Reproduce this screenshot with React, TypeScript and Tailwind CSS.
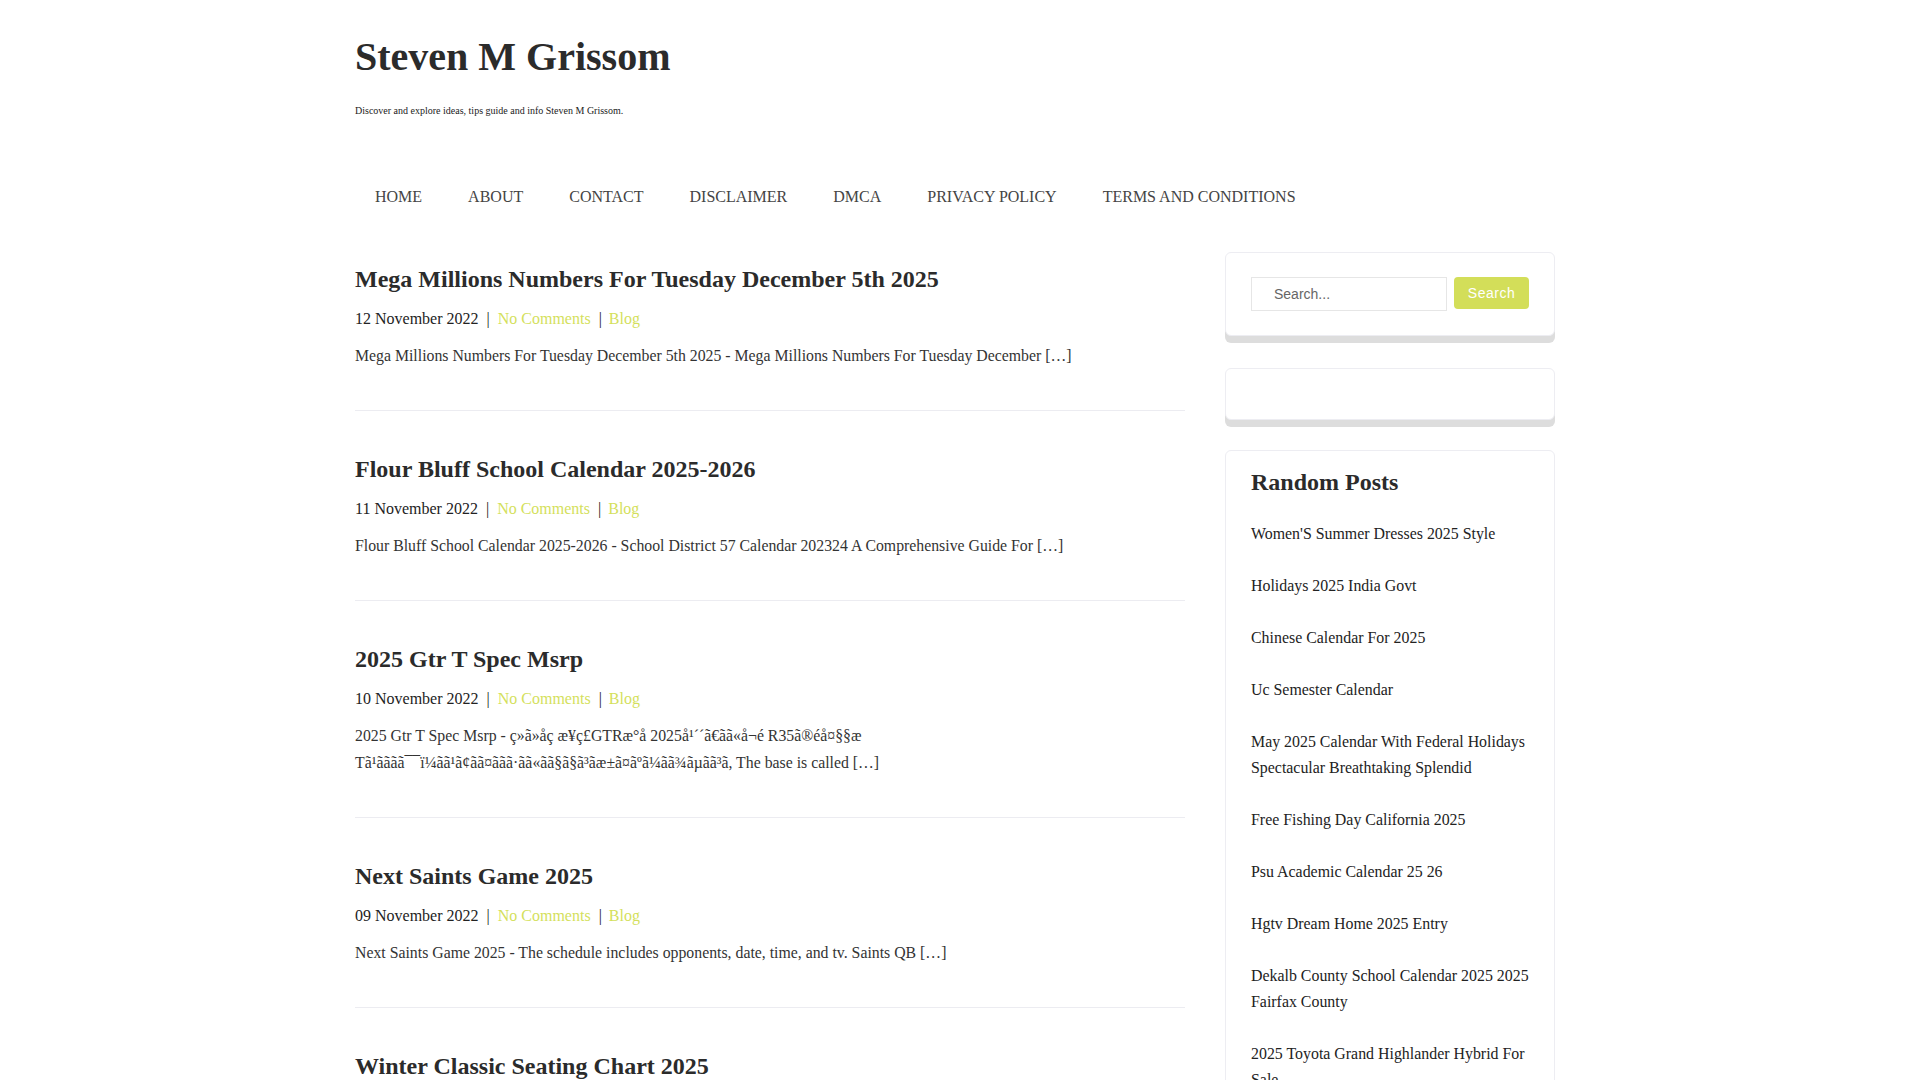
import React from "react";

const posts = [
  {
    title: "Mega Millions Numbers For Tuesday December 5th 2025",
    date: "12 November 2022",
    excerpt:
      "Mega Millions Numbers For Tuesday December 5th 2025 - Mega Millions Numbers For Tuesday December […]",
  },
  {
    title: "Flour Bluff School Calendar 2025-2026",
    date: "11 November 2022",
    excerpt:
      "Flour Bluff School Calendar 2025-2026 - School District 57 Calendar 202324 A Comprehensive Guide For […]",
  },
  {
    title: "2025 Gtr T Spec Msrp",
    date: "10 November 2022",
    excerpt:
      "2025 Gtr T Spec Msrp - ç»ã»åç æ¥ç£GTRæ°å 2025å¹´´ã€ãã«å¬é R35ã®éå¤§§æ Tã¹ãããã¯¯ï¼ãã¹ã¢ãã¤ããã·ãã«ãã§ã§ã³ãæ±ã¤ãºã¼ãã¾ãµãã³ã, The base is called […]",
  },
  {
    title: "Next Saints Game 2025",
    date: "09 November 2022",
    excerpt:
      "Next Saints Game 2025 - The schedule includes opponents, date, time, and tv. Saints QB […]",
  },
  {
    title: "Winter Classic Seating Chart 2025",
    date: "08 November 2022",
    excerpt:
      "Winter Classic Seating Chart 2025 - Winter Classic Seating Chart 2025 Seating Chart For The […]",
  },
  {
    title: "Kentucky Derby 2025 Odds",
    date: "07 November 2022",
    excerpt:
      "Kentucky Derby 2025 Odds - The latest odds and contenders for the run for the roses […]",
  },
];

const randomPosts = [
  "Women'S Summer Dresses 2025 Style",
  "Holidays 2025 India Govt",
  "Chinese Calendar For 2025",
  "Uc Semester Calendar",
  "May 2025 Calendar With Federal Holidays Spectacular Breathtaking Splendid",
  "Free Fishing Day California 2025",
  "Psu Academic Calendar 25 26",
  "Hgtv Dream Home 2025 Entry",
  "Dekalb County School Calendar 2025 2025 Fairfax County",
  "2025 Toyota Grand Highlander Hybrid For Sale",
  "Nfl Draft Order 2025",
  "Easter Sunday 2025 Date",
];

const nav = [
  "HOME",
  "ABOUT",
  "CONTACT",
  "DISCLAIMER",
  "DMCA",
  "PRIVACY POLICY",
  "TERMS AND CONDITIONS",
];

export default function App() {
  return (
    <div
      className="min-h-screen bg-white text-[#222]"
      style={{ fontFamily: '"Liberation Serif", "Times New Roman", serif' }}
    >
      <div className="w-[1210px] mx-auto pr-[10px]">
        <header className="pt-[33px]">
          <h1 className="text-[40px] leading-[48px] font-bold text-[#2b2b2b]">
            Steven M Grissom
          </h1>
          <p className="text-[10px] leading-[14px] mt-[23px] text-[#222]">
            Discover and explore ideas, tips guide and info Steven M Grissom.
          </p>
          <nav className="mt-[67px] flex gap-[6px]">
            {nav.map((n) => (
              <a
                key={n}
                href="#"
                className="px-5 text-[16px] leading-[24px] text-[#444]"
              >
                {n}
              </a>
            ))}
          </nav>
        </header>

        <div className="mt-[43px] flex gap-[40px] items-start">
          <main className="w-[830px] pt-[12px]">
            {posts.map((p, i) => (
              <article
                key={i}
                className={
                  "pb-[41px] border-b border-[#ececf1] " + (i > 0 ? "mt-[43px]" : "")
                }
              >
                <h2 className="text-[24px] leading-[31px] font-bold text-[#2b2b2b]">
                  {p.title}
                </h2>
                <div className="mt-[10px] text-[16px] leading-[27px] text-[#222]">
                  <span>{p.date}</span>
                  <span className="mx-2">|</span>
                  <a href="#" className="text-[#d4df5c]">
                    No Comments
                  </a>
                  <span className="ml-2 mr-[7px]">|</span>
                  <a href="#" className="text-[#d4df5c]">
                    Blog
                  </a>
                </div>
                <p className="mt-[10px] text-[15.8px] leading-[27px] text-[#333]">
                  {p.excerpt}
                </p>
              </article>
            ))}
          </main>

          <aside className="w-[330px] shrink-0">
            <div className="rounded-[6px] border border-[#ededf2] bg-white px-[25px] py-[24px] shadow-[0_7px_0_#dddddd]">
              <form
                className="flex items-start gap-[7px]"
                onSubmit={(e) => e.preventDefault()}
                style={{ fontFamily: '"Liberation Sans", Arial, sans-serif' }}
              >
                <input
                  type="text"
                  placeholder="Search..."
                  className="w-[196px] h-[34px] border border-[#e6e6e6] pl-[22px] text-[14px] text-[#333] placeholder:text-[#666] outline-none"
                />
                <button
                  type="submit"
                  className="w-[76px] h-[32px] rounded-[4px] bg-[#d3de59] text-white text-[14px] tracking-[0.5px]"
                >
                  Search
                </button>
              </form>
            </div>

            <div className="mt-[32px] h-[52px] rounded-[6px] border border-[#ededf2] bg-white shadow-[0_7px_0_#dddddd]"></div>

            <div className="mt-[30px] rounded-t-[6px] border border-[#ededf2] bg-white pl-[25px] pr-[18px] pt-[19px] pb-[20px]">
              <h3 className="text-[24px] leading-[24px] font-bold text-[#2b2b2b]">
                Random Posts
              </h3>
              <ul className="mt-[14px]">
                {randomPosts.map((r) => (
                  <li key={r} className="py-[13px] text-[15.9px] leading-[26px] text-[#222]">
                    <a href="#">{r}</a>
                  </li>
                ))}
              </ul>
            </div>
          </aside>
        </div>
      </div>
    </div>
  );
}
